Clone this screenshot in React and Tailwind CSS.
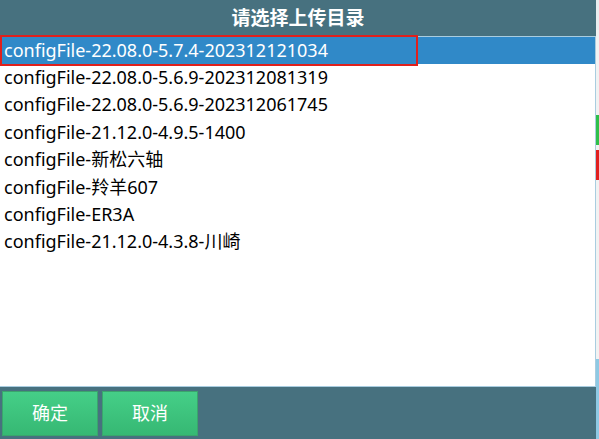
import { useState } from 'react';

const files = [
  'configFile-22.08.0-5.7.4-202312121034',
  'configFile-22.08.0-5.6.9-202312081319',
  'configFile-22.08.0-5.6.9-202312061745',
  'configFile-21.12.0-4.9.5-1400',
  'configFile-新松六轴',
  'configFile-羚羊607',
  'configFile-ER3A',
  'configFile-21.12.0-4.3.8-川崎',
];

const font = { fontFamily: "'Noto Sans', 'Noto Sans CJK SC', sans-serif" };

export default function App() {
  const [selected, setSelected] = useState(0);

  return (
    <div className="flex w-[599px] h-[439px] bg-[#47717f] overflow-hidden" style={font}>
      {/* Dialog */}
      <div className="flex flex-col w-[596px] h-full">
        {/* Title */}
        <div className="h-[36px] flex items-center justify-center text-white text-[19px] font-bold">
          请选择上传目录
        </div>

        {/* List */}
        <div className="flex-1 bg-white border-t border-b border-r border-[#a9cde0]">
          {files.map((f, i) => (
            <div
              key={f}
              onClick={() => setSelected(i)}
              className={`relative h-[27.4px] flex items-center pl-[4px] pb-[2px] text-[18px] leading-none cursor-pointer ${
                selected === i ? 'bg-[#3089c8] text-white' : 'text-black'
              }`}
            >
              {f}
              {selected === i && (
                <div className="absolute left-0 top-[-2px] w-[418px] h-[31px] border-2 border-[#e0201c] pointer-events-none" />
              )}
            </div>
          ))}
        </div>

        {/* Buttons */}
        <div className="h-[52px] flex items-center gap-[4px] pl-[2px]">
          <button className="w-[96px] h-[45px] bg-gradient-to-b from-[#45cf88] to-[#36b873] border border-[#3aa56c] text-white text-[18px]">
            确定
          </button>
          <button className="w-[96px] h-[45px] bg-gradient-to-b from-[#45cf88] to-[#36b873] border border-[#3aa56c] text-white text-[18px]">
            取消
          </button>
        </div>
      </div>

      {/* Edge of window behind */}
      <div className="w-[3px] h-full flex flex-col bg-[#f2f2f2]">
        <div className="h-[30px] bg-[#e9eef0]" />
        <div className="h-[85px]" />
        <div className="h-[30px] bg-[#2fc04a]" />
        <div className="h-[5px]" />
        <div className="h-[30px] bg-[#e02020]" />
        <div className="flex-1" />
        <div className="h-[80px] bg-[#8ec9e4]" />
      </div>
    </div>
  );
}
